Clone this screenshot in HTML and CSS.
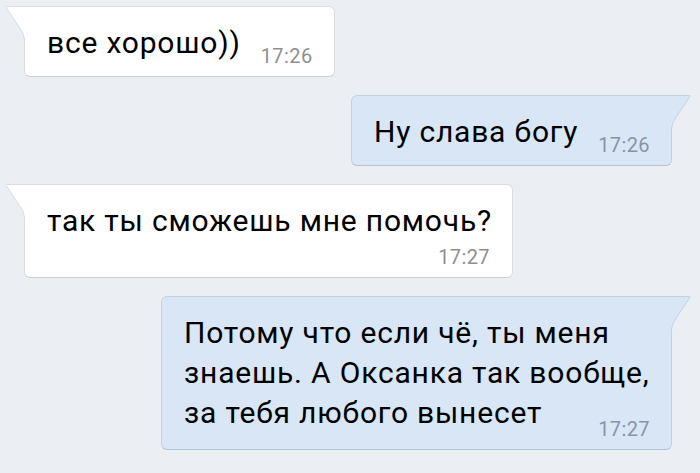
FILE: index.html
```html
<!DOCTYPE html>
<html lang="ru">
<head>
<meta charset="utf-8">
<title>Чат</title>
<link rel="stylesheet" href="styles.css">
</head>
<body>
<div class="chat">
  <div class="bubble bubble--in">
    <svg class="tail" width="21" height="34" viewBox="0 0 21 34"><path class="tail-fill" d="M21 0 H1.8 Q0 0 1 1.6 L14.5 21.5 Q19.5 28 19.5 33 V34 H21 Z"/><path class="tail-line" d="M21 0.5 H1.8 Q0.4 0.5 1.4 1.9 L14.5 21.5 Q19.5 28 19.5 34"/></svg>
    <span class="text">все хорошо))</span><span class="time">17:26</span>
  </div>
  <div class="bubble bubble--out">
    <svg class="tail" width="21" height="34" viewBox="0 0 21 34"><path class="tail-fill" d="M21 0 H1.8 Q0 0 1 1.6 L14.5 21.5 Q19.5 28 19.5 33 V34 H21 Z"/><path class="tail-line" d="M21 0.5 H1.8 Q0.4 0.5 1.4 1.9 L14.5 21.5 Q19.5 28 19.5 34"/></svg>
    <span class="text">Ну слава богу</span><span class="time">17:26</span>
  </div>
  <div class="bubble bubble--in bubble--stack">
    <svg class="tail" width="21" height="34" viewBox="0 0 21 34"><path class="tail-fill" d="M21 0 H1.8 Q0 0 1 1.6 L14.5 21.5 Q19.5 28 19.5 33 V34 H21 Z"/><path class="tail-line" d="M21 0.5 H1.8 Q0.4 0.5 1.4 1.9 L14.5 21.5 Q19.5 28 19.5 34"/></svg>
    <span class="text">так ты сможешь мне помочь?</span><span class="time">17:27</span>
  </div>
  <div class="bubble bubble--out bubble--multi">
    <svg class="tail" width="21" height="34" viewBox="0 0 21 34"><path class="tail-fill" d="M21 0 H1.8 Q0 0 1 1.6 L14.5 21.5 Q19.5 28 19.5 33 V34 H21 Z"/><path class="tail-line" d="M21 0.5 H1.8 Q0.4 0.5 1.4 1.9 L14.5 21.5 Q19.5 28 19.5 34"/></svg>
    <span class="text">Потому что если чё, ты меня знаешь. А Оксанка так вообще, за тебя любого вынесет</span><span class="time">17:27</span>
  </div>
</div>
</body>
</html>
```

FILE: styles.css
```css
html, body {
  margin: 0;
  padding: 0;
}

body {
  background: #ebeff4;
  font-family: Roboto, "Noto Sans", "Liberation Sans", sans-serif;
  color: #000;
}

.chat {
  display: flex;
  flex-direction: column;
  align-items: flex-start;
  gap: 18px;
  padding: 6px 28px 0 24px;
}

.bubble {
  --bg: #ffffff;
  --line: #d9dde3;
  position: relative;
  display: flow-root;
  box-sizing: border-box;
  max-width: 511px;
  padding: 16px 18px 8px 22px;
  background: var(--bg);
  border: 1px solid var(--line);
  border-bottom-color: #cbd0d7;
  border-radius: 6px;
}

.bubble--in {
  border-top-left-radius: 0;
}

.bubble--out {
  --bg: #d9e6f6;
  --line: #c3d1e2;
  border-bottom-color: #b4c3d6;
  align-self: flex-end;
  border-top-right-radius: 0;
}

.tail {
  position: absolute;
  top: -1px;
  left: -20px;
  display: block;
}

.bubble--out .tail {
  left: auto;
  right: -20px;
  transform: scaleX(-1);
}

.tail-fill {
  fill: var(--bg);
}

.tail-line {
  fill: none;
  stroke: var(--line);
  stroke-width: 1;
}

.text {
  font-size: 30px;
  line-height: 40px;
  letter-spacing: 0.8px;
}

.time {
  float: right;
  margin: 21px 3px 0 20px;
  font-size: 20px;
  line-height: 24px;
  letter-spacing: 0.4px;
  color: #8f8f8f;
}

.bubble--out .time {
  color: #8895a3;
}

.bubble--multi .time {
  margin-top: 24px;
}

.bubble--stack {
  padding-right: 20px;
}

.bubble--stack .text {
  display: block;
}

.bubble--stack .time {
  float: none;
  display: block;
  text-align: right;
  margin: 4px 2px 0 0;
}
```
